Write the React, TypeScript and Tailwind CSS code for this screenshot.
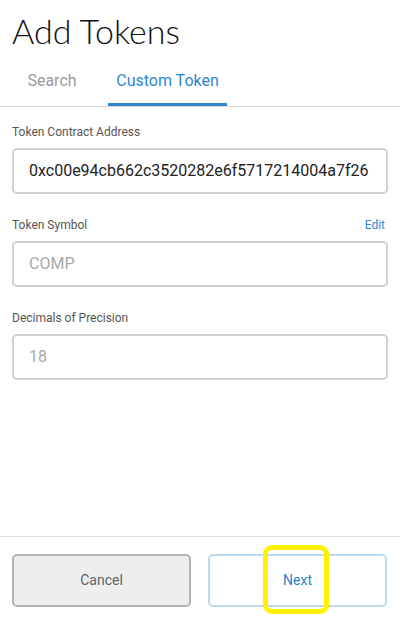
import { useState } from "react";

const Field = ({
  label,
  value,
  muted = false,
  action
}: {
  label: string;
  value: string;
  muted?: boolean;
  action?: string;
}) => (
  <div className="flex flex-col">
    <div className="flex h-[18px] items-center justify-between pr-[3px]">
      <span className="text-[12px] text-[#555]">{label}</span>
      {action && <span className="text-[12px] text-[#2f86cf]">{action}</span>}
    </div>
    <div className="mt-[7px] flex h-[46px] items-center rounded-[5px] border-2 border-[#cfcfcf] bg-white px-[15px]">
      <span className={`text-[16px] ${muted ? "text-[#a8a8a8]" : "text-[#222]"}`}>{value}</span>
    </div>
  </div>
);

export default function App() {
  const [tab, setTab] = useState("custom");

  return (
    <div className="flex h-[619px] w-[400px] flex-col overflow-hidden bg-white font-['Roboto',sans-serif]">
      <h1 className="px-[12px] pt-[11px] font-['Lato',sans-serif] text-[34px] font-light leading-[39px] text-[#111]">
        Add Tokens
      </h1>

      <div className="mt-[19px] flex border-b border-[#d9d9d9] pl-[12px]">
        <button
          type="button"
          onClick={() => setTab("search")}
          className={`flex h-[37px] w-[80px] justify-center border-b-[3px] pb-[8px] text-[16px] ${
            tab === "search" ? "border-[#2f86cf] text-[#2f86cf]" : "border-transparent text-[#9a9a9a]"
          }`}
        >
          Search
        </button>
        <button
          type="button"
          onClick={() => setTab("custom")}
          className={`ml-[16px] flex h-[37px] w-[119px] justify-center border-b-[3px] pb-[8px] text-[16px] ${
            tab === "custom" ? "border-[#2f86cf] text-[#2f86cf]" : "border-transparent text-[#9a9a9a]"
          }`}
        >
          Custom Token
        </button>
      </div>

      <div className="flex flex-1 flex-col gap-[22px] px-[12px] pt-[16px]">
        <Field label="Token Contract Address" value="0xc00e94cb662c3520282e6f5717214004a7f26" />
        <Field label="Token Symbol" value="COMP" muted action="Edit" />
        <Field label="Decimals of Precision" value="18" muted />
      </div>

      <div className="flex gap-[17px] border-t border-[#dcdcdc] px-[12px] pb-[12px] pt-[17px]">
        <button
          type="button"
          className="h-[53px] w-[179px] rounded-[5px] border-2 border-[#b3b3b3] bg-[#eeeeee] text-[14px] text-[#5f6368]"
        >
          Cancel
        </button>
        <div className="relative w-[179px]">
          <button
            type="button"
            className="h-[53px] w-full rounded-[5px] border-2 border-[#bcd9ee] bg-white text-[14px] text-[#2f7fc8]"
          >
            Next
          </button>
          <div className="pointer-events-none absolute left-[55px] top-[-9px] h-[69px] w-[66px] rounded-[9px] border-[5px] border-[#fff200]" />
        </div>
      </div>
    </div>
  );
}
